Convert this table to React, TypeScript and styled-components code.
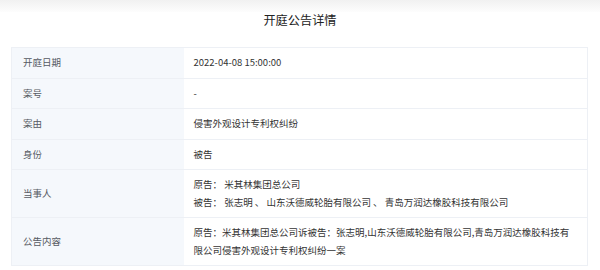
import styled, { createGlobalStyle } from "styled-components";

const GlobalStyle = createGlobalStyle`
  html, body {
    margin: 0;
    padding: 0;
    background: #ffffff;
  }
  body {
    font-family: "Noto Sans CJK SC", "Noto Sans", sans-serif;
  }
`;

const Page = styled.div`
  width: 600px;
  height: 270px;
  overflow: hidden;
  background: #fff;
`;

const TopShade = styled.div`
  height: 12px;
  background: linear-gradient(#f1f1f1, #fdfdfd);
`;

const Title = styled.h2`
  margin: 0;
  height: 35px;
  line-height: 16px;
  text-align: center;
  font-size: 12.2px;
  font-weight: 400;
  color: #222;
`;

const Table = styled.table`
  width: 577px;
  margin-left: 11px;
  border-collapse: collapse;
  table-layout: fixed;
  font-size: 9.5px;
  line-height: 17.5px;
`;

const Row = styled.tr`
  border-top: 1px solid #edf0f5;
  border-bottom: 1px solid #edf0f5;
`;

const Label = styled.td`
  box-sizing: border-box;
  width: 172px;
  padding: 6px 10px 6px 11px;
  background: #f5f8fc;
  color: #555a63;
  vertical-align: middle;
  border-left: 1px solid #edf0f5;
`;

const Value = styled.td`
  padding: 6px 12px 6px 10px;
  color: #333;
  vertical-align: middle;
  border-right: 1px solid #edf0f5;
  word-break: break-all;
`;

const Line = styled.div``;

const rows: { label: string; value: string[] }[] = [
  { label: "开庭日期", value: ["2022-04-08 15:00:00"] },
  { label: "案号", value: ["-"] },
  { label: "案由", value: ["侵害外观设计专利权纠纷"] },
  { label: "身份", value: ["被告"] },
  {
    label: "当事人",
    value: [
      "原告： 米其林集团总公司",
      "被告： 张志明 、 山东沃德威轮胎有限公司 、 青岛万润达橡胶科技有限公司",
    ],
  },
  {
    label: "公告内容",
    value: [
      "原告：米其林集团总公司诉被告：张志明,山东沃德威轮胎有限公司,青岛万润达橡胶科技有限公司侵害外观设计专利权纠纷一案",
    ],
  },
];

const App = () => {
  return (
    <Page>
      <GlobalStyle />
      <TopShade />
      <Title>开庭公告详情</Title>
      <Table>
        <tbody>
          {rows.map((r) => (
            <Row key={r.label}>
              <Label>{r.label}</Label>
              <Value>
                {r.value.map((v, i) => (
                  <Line key={i}>{v}</Line>
                ))}
              </Value>
            </Row>
          ))}
        </tbody>
      </Table>
    </Page>
  );
};

export default App;
